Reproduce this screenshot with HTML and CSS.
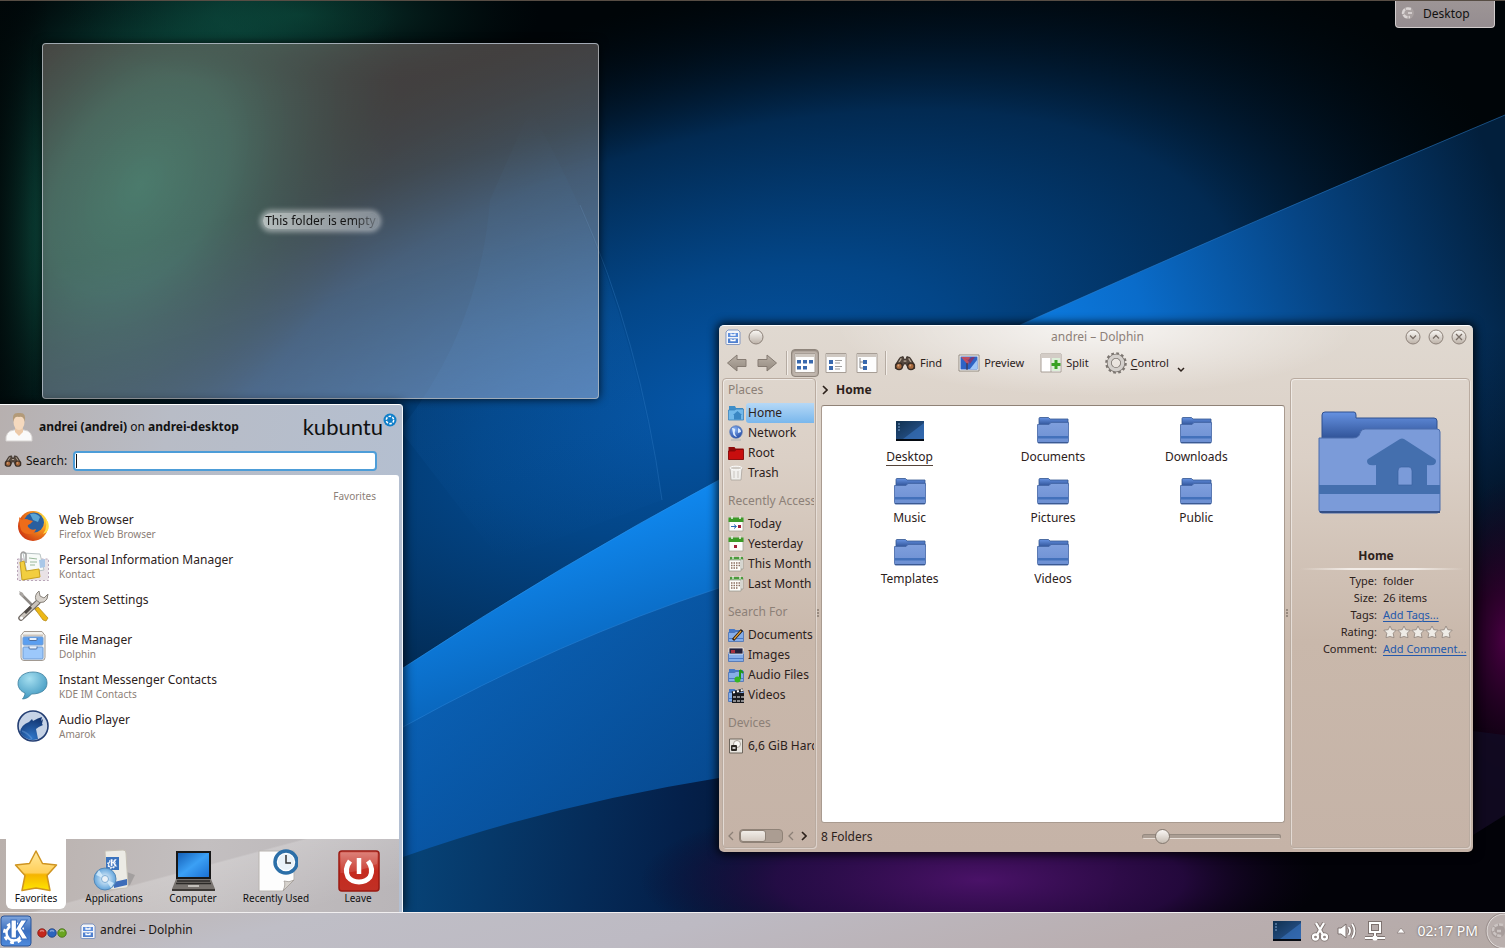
FILE: index.html
```html
<!DOCTYPE html>
<html lang="en">
<head>
<meta charset="utf-8">
<title>Desktop</title>
<link rel="stylesheet" href="styles.css">
</head>
<body>
<svg class="defs" width="0" height="0" aria-hidden="true">
  <defs>
    <linearGradient id="gFold" x1="0" y1="0" x2="0" y2="1"><stop offset="0" stop-color="#7f9fdd"/><stop offset="1" stop-color="#6c8fd2"/></linearGradient>
    <linearGradient id="gBack" x1="0" y1="0" x2="0" y2="1"><stop offset="0" stop-color="#6692e2"/><stop offset="1" stop-color="#2f5296"/></linearGradient>
    <linearGradient id="gBall" x1="0" y1="0" x2="0" y2="1"><stop offset="0" stop-color="#fbf9f6"/><stop offset="1" stop-color="#bcb1a7"/></linearGradient>
    <linearGradient id="gGrey" x1="0" y1="0" x2="0" y2="1"><stop offset="0" stop-color="#b9b0a6"/><stop offset="1" stop-color="#948a80"/></linearGradient>
    <linearGradient id="gStar" x1="0" y1="0" x2="0" y2="1"><stop offset="0" stop-color="#ffe9a0"/><stop offset=".55" stop-color="#ffcf58"/><stop offset=".6" stop-color="#f5b400"/><stop offset="1" stop-color="#ffe600"/></linearGradient>
    <linearGradient id="gRed" x1="0" y1="0" x2="0" y2="1"><stop offset="0" stop-color="#d9736a"/><stop offset=".5" stop-color="#c52a1e"/><stop offset="1" stop-color="#c03025"/></linearGradient>
    <linearGradient id="gScreen" x1="0" y1="0" x2="1" y2="1"><stop offset="0" stop-color="#1560b8"/><stop offset=".5" stop-color="#3ba0f5"/><stop offset="1" stop-color="#1b70d2"/></linearGradient>
    <linearGradient id="gDesk" x1="0" y1="0" x2="1" y2="1"><stop offset="0" stop-color="#10304f"/><stop offset="1" stop-color="#2d5c9c"/></linearGradient>
    <linearGradient id="gKde" x1="0" y1="0" x2="0" y2="1"><stop offset="0" stop-color="#7fa5dc"/><stop offset=".5" stop-color="#3a6fc0"/><stop offset="1" stop-color="#4f8bdd"/></linearGradient>
    <radialGradient id="gBubble" cx=".4" cy=".25" r=".8"><stop offset="0" stop-color="#a5dff0"/><stop offset="1" stop-color="#3a93bd"/></radialGradient>
    <radialGradient id="gGlobe" cx=".4" cy=".3" r=".8"><stop offset="0" stop-color="#8ab4f4"/><stop offset="1" stop-color="#173e9c"/></radialGradient>
    <radialGradient id="gFox" cx=".8" cy=".25" r=".95"><stop offset="0" stop-color="#ffdf3c"/><stop offset=".4" stop-color="#f5901c"/><stop offset="1" stop-color="#c92d10"/></radialGradient>
    <radialGradient id="gWolf" cx=".5" cy=".9" r=".9"><stop offset="0" stop-color="#2f76c8"/><stop offset="1" stop-color="#12346f"/></radialGradient>
    <radialGradient id="gDisc"><stop offset="0" stop-color="#eef7fd"/><stop offset="1" stop-color="#62a5dc"/></radialGradient>
  </defs>
  <symbol id="folder" viewBox="0 0 32 32">
    <path d="M2 3.500q0-1 1-1h8.500l1.500 1.500h18v6H2z" fill="url(#gBack)" stroke="#34568f" stroke-width=".8"/>
    <path d="M.500 9.500h11.500l2-2h17.500v19q0 1.500-1.500 1.500H2q-1.500 0-1.500-1.500z" fill="url(#gFold)" stroke="#4264a4" stroke-width=".8"/>
    <path d="M1 21h30v2.500H1z" fill="#4371bb"/><path d="M1 27.600h30" stroke="#39578f"/>
  </symbol>
  <symbol id="mini-folder" viewBox="0 0 16 16">
    <path d="M1 2h5.500l1 1H15v4H1z" fill="#4678c6"/>
    <path d="M.500 5.500h6L8 4.500h7.500v10H.500z" fill="#86aee8" stroke="#466fb4" stroke-width=".8"/><path d="M1 11.500h14" stroke="#4d7bc5"/>
  </symbol>
  <symbol id="cabinet" viewBox="0 0 32 32">
    <path d="M7 1.500h18l3 4v22q0 3-3 3H7q-3 0-3-3v-22z" fill="#f2f2f0" stroke="#a29a92"/>
    <path d="M6 5.500h20" stroke="#cfc6bd" stroke-width="2"/>
    <rect x="6" y="7" width="20" height="8" rx="1" fill="#5b9ff0" stroke="#6f9bd3"/><rect x="6" y="17" width="20" height="12" rx="1" fill="#9cc8fb" stroke="#6f9bd3"/>
    <path d="M12 8v1.500q0 1 1 1h6q1 0 1-1V8M12 16.500v1.500q0 1 1 1h6q1 0 1-1v-1.500" fill="#e7f1fd" stroke="#4c6e9f"/>
  </symbol>
  <symbol id="mini-cabinet" viewBox="0 0 16 16">
    <path d="M3 1h10l2 2v11.500q0 1-1 1H2q-1 0-1-1V3z" fill="#f4f5f8" stroke="#6a87bb" stroke-width=".8"/>
    <rect x="3" y="4" width="10" height="4" fill="#5f8fdd"/><rect x="3" y="9.500" width="10" height="4.500" fill="#4f80cf"/>
    <path d="M6 4.500v1.500h4V4.500M6 10v1.500h4V10" fill="none" stroke="#fff" stroke-width="1.300"/>
  </symbol>
  <symbol id="binoculars" viewBox="0 0 24 20">
    <path d="M6.500 4l3.500-1 1 3h2l1-3 3.500 1 5 8v4h-7l-2.500-5h-2L8.500 16H1.500v-4z" fill="#54473d" stroke="#2a211b" stroke-width=".8"/>
    <path d="M8 5l-3 5M16 5l3 5M10.500 8h3" stroke="#b5a798" stroke-width="1.300"/>
    <circle cx="5.500" cy="13.500" r="4.300" fill="#3a2e26"/><circle cx="18.500" cy="13.500" r="4.300" fill="#3a2e26"/>
    <circle cx="5.500" cy="13.500" r="2.800" fill="#a86a3e"/><circle cx="18.500" cy="13.500" r="2.800" fill="#a86a3e"/><circle cx="4.800" cy="12.700" r="1" fill="#d9a87e"/><circle cx="17.800" cy="12.700" r="1" fill="#d9a87e"/>
  </symbol>
  <symbol id="kgear" viewBox="0 0 32 32">
    <circle cx="14" cy="18" r="9.500" fill="none" stroke="#fff" stroke-width="3" stroke-dasharray="3.700 3.760"/>
    <circle cx="14" cy="18" r="7.500" fill="none" stroke="#fff" stroke-width="2.500"/>
    <path d="M11 5h5.500v7.500L21 5h6l-5.500 8.500L28 24h-6l-5-8.500-.500.800V23H11z" fill="#fff" stroke="#3a6fc0" stroke-width="1.200"/>
  </symbol>
  <symbol id="calendar" viewBox="0 0 16 16">
    <path d="M1 3h14v12H1z" fill="#fdfdfa" stroke="#a8a79d" stroke-width=".8"/><path d="M.500 1.500h15V6H.500z" fill="#3c9a28"/><path d="M4 0v3M12 0v3" stroke="#e8f3e5" stroke-width="1.500"/>
  </symbol>
  <symbol id="month" viewBox="0 0 16 16">
    <path d="M3 2h12v11H3z" fill="#fdfdfa" stroke="#9b9a90" stroke-width=".8"/><path d="M1 4h12v11H1z" fill="#fdfdfa" stroke="#9b9a90" stroke-width=".8"/><path d="M2 1h13v2.500H2z" fill="#4a9a3b"/><path d="M5 0v3M12 0v3" stroke="#e8f3e5" stroke-width="1.300"/>
    <path d="M3 7h9M3 9.500h9M3 12h7" stroke="#8b6f61" stroke-width="1.500" stroke-dasharray="1.500 1"/>
  </symbol>
  <symbol id="deskthumb" viewBox="0 0 28 20">
    <path d="M0 0h28v20H0z" fill="url(#gDesk)"/><path d="M7 18L28 2v16z" fill="#3872bd" opacity=".65"/><path d="M0 18h28v2H0z" fill="#050a12"/><path d="M2 3h2M2 6h2M2 9h2" stroke="#7fa4d0" stroke-width="1.200"/>
  </symbol>
  <symbol id="ratestar" viewBox="0 0 14 14">
    <path d="M7 1l1.800 3.700 4.400.500-3 3 .8 4.500L7 11.500l-4 1.200.8-4.500-3-3 4.400-.5z" fill="#eeebe6" stroke="#958981" stroke-width=".9"/>
  </symbol>
</svg>

<main class="desktop">
  <svg class="wallpaper" viewBox="0 0 1505 948" preserveAspectRatio="none" aria-hidden="true">
    <defs>
      <radialGradient id="wCore" gradientUnits="userSpaceOnUse" cx="0" cy="0" r="1" gradientTransform="translate(720 400) rotate(-16) scale(820 400)"><stop offset="0" stop-color="#0556a8"/><stop offset=".3" stop-color="#034688"/><stop offset=".65" stop-color="#022a52"/><stop offset="1" stop-color="#000d18" stop-opacity="0"/></radialGradient>
      <radialGradient id="wGreen"><stop offset="0" stop-color="#137058"/><stop offset=".35" stop-color="#0f5a4a" stop-opacity=".9"/><stop offset=".65" stop-color="#083a32" stop-opacity=".55"/><stop offset="1" stop-color="#03201c" stop-opacity="0"/></radialGradient>
      <radialGradient id="wPurple"><stop offset="0" stop-color="#4a1268"/><stop offset=".6" stop-color="#2b0a48" stop-opacity=".8"/><stop offset="1" stop-color="#10031f" stop-opacity="0"/></radialGradient>
      <radialGradient id="wMag"><stop offset="0" stop-color="#480042"/><stop offset="1" stop-color="#20001e" stop-opacity="0"/></radialGradient>
      <linearGradient id="wLeft" x1="0" y1="0" x2="1" y2="0"><stop offset="0" stop-color="#010809" stop-opacity=".8"/><stop offset="1" stop-color="#010809" stop-opacity="0"/></linearGradient>
      <linearGradient id="wArc" x1="0" y1="0" x2="0" y2="1"><stop offset="0" stop-color="#1466b8" stop-opacity="0"/><stop offset=".5" stop-color="#1466b8" stop-opacity=".2"/><stop offset="1" stop-color="#1466b8" stop-opacity="0"/></linearGradient>
      <linearGradient id="wBeam" gradientUnits="userSpaceOnUse" x1="960" y1="400" x2="1505" y2="200"><stop offset="0" stop-color="#0e86f0"/><stop offset=".35" stop-color="#0a6cca"/><stop offset=".65" stop-color="#064585"/><stop offset="1" stop-color="#021f3c"/></linearGradient>
      <linearGradient id="wLow" gradientUnits="userSpaceOnUse" x1="560" y1="520" x2="680" y2="900"><stop offset="0" stop-color="#108af2"/><stop offset=".5" stop-color="#075bac"/><stop offset="1" stop-color="#032d63"/></linearGradient>
      <linearGradient id="wLow2" gradientUnits="userSpaceOnUse" x1="400" y1="720" x2="760" y2="800"><stop offset="0" stop-color="#0a5cae"/><stop offset="1" stop-color="#07498f"/></linearGradient>
      <linearGradient id="wLow3" gradientUnits="userSpaceOnUse" x1="400" y1="850" x2="1000" y2="930"><stop offset="0" stop-color="#074478"/><stop offset=".45" stop-color="#04204a"/><stop offset="1" stop-color="#06020d"/></linearGradient>
      <linearGradient id="wDown" gradientUnits="userSpaceOnUse" x1="0" y1="330" x2="0" y2="600"><stop offset="0" stop-color="#020810" stop-opacity="0"/><stop offset="1" stop-color="#020208"/></linearGradient>
    </defs>
    <path d="M0 0h1505v948H0z" fill="#000508"/>
    <path d="M380 400H760V948H380z" fill="#034a90"/>
    <path d="M0 0h1505v948H0z" fill="url(#wCore)"/>
    <ellipse cx="140" cy="185" rx="220" ry="340" transform="rotate(32 140 185)" fill="url(#wGreen)"/>
    <ellipse cx="300" cy="15" rx="240" ry="70" fill="url(#wGreen)" opacity=".4"/>
    <path d="M0 0h50v404H0z" fill="url(#wLeft)"/>
    <path d="M530 110Q625 270 662 500L500 560L400 430Q480 330 490 200z" fill="url(#wArc)"/>
    <path d="M580 205Q640 340 662 500" fill="none" stroke="#3a88cf" opacity=".3"/>
    <path d="M1505 115Q1250 222 1020 325Q820 420 719 480V948H1505z" fill="url(#wBeam)"/>
    <path d="M1505 115Q1250 222 1020 325" fill="none" stroke="#2f86d6" opacity=".5"/>
    <path d="M1100 330h405v618H1100z" fill="url(#wDown)"/>
    <path d="M403 668Q560 565 719 480L900 700V948H403z" fill="url(#wLow)"/>
    <path d="M403 668Q560 565 719 480" fill="none" stroke="#2b95ec" opacity=".6"/>
    <path d="M403 727Q560 640 719 588L900 600V948H403z" fill="url(#wLow2)" opacity=".75"/>
    <path d="M403 727Q560 640 719 588" fill="none" stroke="#2b86da" opacity=".5"/>
    <path d="M403 857Q550 805 719 778L1505 760V948H403z" fill="url(#wLow3)"/>
    <path d="M1150 700L1505 730V948H1100z" fill="#020208"/>
    <ellipse cx="980" cy="880" rx="340" ry="90" fill="url(#wPurple)"/>
    <ellipse cx="1505" cy="640" rx="65" ry="160" fill="url(#wMag)"/>
    <path d="M1473 731l32 4v80l-32 20z" fill="#120a22" opacity=".9"/>
    <path d="M0 .500h1505" stroke="#574d44"/>
  </svg>

  <button class="toolbox" type="button">
    <svg width="16" height="16" viewBox="0 0 16 16" aria-hidden="true"><circle cx="8" cy="7" r="6" fill="#a9a1a1"/><path d="M11 3Q4 1 3 7Q4 12 10 11" fill="none" stroke="#dad5d5" stroke-width="2.500" stroke-dasharray="5 1"/><path d="M8 7h4" stroke="#d3cdcd" stroke-width="2"/></svg>
    <span>Desktop</span>
  </button>

  <section class="folder-view" aria-label="Desktop folder"><p><span>This folder is empty</span></p></section>

  <section class="launcher" aria-label="Application launcher">
    <header class="launcher-head">
      <div class="user-row">
        <svg width="28" height="32" viewBox="0 0 28 32" aria-hidden="true"><path d="M1 30Q0 20 9 19h10q9 1 8 11z" fill="#fafafa" stroke="#d8d4d2"/><path d="M10 17h8v4l-4 4-4-4z" fill="#ecc9a8"/><ellipse cx="14" cy="11" rx="5.500" ry="8" fill="#f5d9be"/><path d="M8.500 11Q6 1 14 2Q22 1 19.500 11Q19 5 14 6Q9 5 8.500 11z" fill="#b39a78"/></svg>
        <span class="who"><b>andrei (andrei)</b> on <b>andrei-desktop</b></span>
        <span class="brand">kubuntu<svg width="14" height="14" viewBox="0 0 14 14" aria-hidden="true"><circle cx="7" cy="7" r="6.500" fill="#0f7fca"/><circle cx="7" cy="7" r="3.700" fill="none" stroke="#fff" stroke-width="1.500" stroke-dasharray="2.600 1.270"/></svg></span>
      </div>
      <div class="search-row">
        <svg width="18" height="16" aria-hidden="true"><use href="#binoculars"/></svg>
        <label for="q">Search:</label><input id="q" type="text">
      </div>
    </header>
    <div class="launcher-body">
      <h2>Favorites</h2>
      <ul>
        <li><a href="#web"><svg width="32" height="32" viewBox="0 0 32 32"><circle cx="16" cy="16" r="15" fill="url(#gFox)"/><circle cx="17" cy="12.500" r="10" fill="#2a5f9f"/><path d="M13 4q6-2 10 3l-2 5-5-2z" fill="#5ba5d3"/><path d="M2 7l3 3q4-2 7 0l4 1-3 3q-4 1-1 4 3 3 7 1-1 5-7 5-8 0-9-8z" fill="#ee6c1a"/><path d="M27 6q5 10-1 18 8-3 5-12z" fill="#ffe04a"/></svg><span><strong>Web Browser</strong><small>Firefox Web Browser</small></span></a></li>
        <li><a href="#pim"><svg width="32" height="32" viewBox="0 0 32 32"><path d="M.500 9h31v21.500H.500z" fill="#e9e2e6" stroke="#b9a6b9" stroke-dasharray="2 2"/><path d="M6 3l17 1 4 16-17 3z" fill="#f7faf8" stroke="#b9c3c4"/><path d="M22 10l6-1v8l-5 1z" fill="#a9c7e8"/><path d="M3 12l4-1 2 10 13-2 1 8-18 3z" fill="#f2ce40" stroke="#c7a11f"/><path d="M4 12V4q2-4 5 0v9" fill="none" stroke="#9e9e9e" stroke-width="1.500"/><path d="M12 8l8 1M13 12l7 0M13 15l5 0" stroke="#99b89a"/></svg><span><strong>Personal Information Manager</strong><small>Kontact</small></span></a></li>
        <li><a href="#settings"><svg width="32" height="32" viewBox="0 0 32 32"><path d="M3 3l18 18" stroke="#8e8a86" stroke-width="2.500"/><path d="M2 1l4 2 1 4-3-1z" fill="#aaa6a2"/><path d="M21 12L4 28" stroke="#6d6762" stroke-width="5.500" stroke-linecap="round"/><path d="M21 12L4 28" stroke="#c9c3bc" stroke-width="3.300" stroke-linecap="round"/><path d="M14 17L8 23" stroke="#4d4844" stroke-width="3"/><path d="M18 19l3-2 10 11-2 3-3-1z" fill="#edb816" stroke="#b18410" stroke-width=".7"/><path d="M22 1q-5 4-3 9 3 4 8 2 4-2 4-8l-4 4-4-2z" fill="#d7d2cc" stroke="#7e7871" stroke-width=".9"/><circle cx="4.500" cy="28" r="1.500" fill="#fff"/></svg><span><strong>System Settings</strong></span></a></li>
        <li><a href="#files"><svg width="32" height="32"><use href="#cabinet"/></svg><span><strong>File Manager</strong><small>Dolphin</small></span></a></li>
        <li><a href="#im"><svg width="32" height="32" viewBox="0 0 32 32"><path d="M16 2C7 2 1 7 1 13.500c0 4.500 3 8 7 9.500 0 2-1 4-2.500 6 4 0 7-2.500 9-5C24 24 30 20 30 13 30 6 24 2 16 2z" fill="url(#gBubble)" stroke="#3a7c9c" stroke-width=".8"/></svg><span><strong>Instant Messenger Contacts</strong><small>KDE IM Contacts</small></span></a></li>
        <li><a href="#audio"><svg width="32" height="32" viewBox="0 0 32 32"><circle cx="16" cy="16" r="15" fill="#c6d3e6" stroke="#233e73" stroke-width="1.600"/><path d="M3 22q1-7 9-10l3-3 1 2q5-3 9-4l-1 4 2-2-1 5 1 1q-5 2-7 4l2 10q-6 2-10 0-6-2-8-7z" fill="url(#gWolf)"/><path d="M5 21q6 2 10 8" fill="none" stroke="#7aaae0" stroke-width="1.500" opacity=".4"/></svg><span><strong>Audio Player</strong><small>Amarok</small></span></a></li>
      </ul>
    </div>
    <nav class="tabs" aria-label="Launcher sections">
      <button type="button" class="tab active"><svg width="44" height="44" viewBox="0 0 44 44"><path d="M22 2l6.500 12.500 14 1.500-9.500 10.500 3 15L22 39 8 41.500l3-15L1.500 16l14-1.500z" fill="url(#gStar)" stroke="#cf9420" stroke-width="1.500" stroke-linejoin="round"/></svg>Favorites</button>
      <button type="button" class="tab"><svg width="44" height="44" viewBox="0 0 44 44"><path d="M30 40l8-4 5-10-8-3z" fill="#777" opacity=".4"/><path d="M13 2l18-1q3 0 3 3l2 33q0 2-2 2l-19 2z" fill="#ecebe5" stroke="#c5c0b5"/><path d="M14 8h13v13H14z" fill="#3a73bd"/><svg x="14" y="8" width="13" height="13"><use href="#kgear"/></svg><path d="M22 33l13-3v6l-13 3z" fill="#3e6db9"/><circle cx="13" cy="30" r="11" fill="url(#gDisc)" stroke="#5587b5"/><path d="M13 30L4 26l3-5zM13 30l9 4-3 5z" fill="#d9effc" opacity=".8"/><circle cx="13" cy="30" r="3.500" fill="#eaf1f7" stroke="#7faed6"/></svg>Applications</button>
      <button type="button" class="tab"><svg width="44" height="44" viewBox="0 0 44 44"><path d="M5 2h35v28H5z" fill="#171717"/><path d="M7 4h31v24H7z" fill="url(#gScreen)"/><path d="M5 30h35l4 10H1z" fill="#77726e"/><path d="M6 32h33M5 34.500h35" stroke="#2b2927" stroke-width="1.500"/><path d="M1 40h43v2H1z" fill="#3c3835"/><path d="M17 37h11" stroke="#c2beb9" stroke-width="2"/></svg>Computer</button>
      <button type="button" class="tab"><svg width="44" height="44" viewBox="0 0 44 44"><path d="M5 2h35v29L29 42H5z" fill="#fdfdfd" stroke="#b9b4b0"/><path d="M40 31L29 42q3-7 1-10 5 2 10-1z" fill="#d6d2cd" stroke="#a19b95" stroke-width=".8"/><circle cx="32" cy="13" r="11" fill="#fff" stroke="#2c6fa8" stroke-width="3.500"/><circle cx="32" cy="13" r="8" fill="#e9f2f9"/><path d="M32 6v8h5" fill="none" stroke="#333" stroke-width="1.500"/></svg>Recently Used</button>
      <button type="button" class="tab"><svg width="44" height="44" viewBox="0 0 44 44"><rect x="3" y="2" width="40" height="40" rx="3" fill="url(#gRed)" stroke="#9b1a12" stroke-width="1.500"/><path d="M4.500 24Q21 24 41 15V4H5z" fill="#fff" opacity=".13"/><path d="M14 12Q8 20 12 28Q16 33 23 33T34 28Q38 20 32 12" fill="none" stroke="#fff" stroke-width="5"/><path d="M23 9v16" stroke="#fff" stroke-width="4.500"/></svg>Leave</button>
    </nav>
  </section>

  <section class="window" aria-label="andrei – Dolphin">
    <header class="titlebar">
      <svg width="16" height="16" aria-hidden="true"><use href="#mini-cabinet"/></svg>
      <button type="button" aria-label="On all desktops"><svg width="16" height="16" viewBox="0 0 16 16"><circle cx="8" cy="8" r="7" fill="url(#gBall)" stroke="#8d827a"/></svg></button>
      <h1>andrei – Dolphin</h1>
      <button type="button" aria-label="Minimize"><svg width="16" height="16" viewBox="0 0 16 16"><circle cx="8" cy="8" r="7" fill="url(#gBall)" stroke="#8d827a"/><path d="M5 6.500l3 3 3-3" fill="none" stroke="#796e66" stroke-width="1.300"/></svg></button>
      <button type="button" aria-label="Maximize"><svg width="16" height="16" viewBox="0 0 16 16"><circle cx="8" cy="8" r="7" fill="url(#gBall)" stroke="#8d827a"/><path d="M5 9.500l3-3 3 3" fill="none" stroke="#796e66" stroke-width="1.300"/></svg></button>
      <button type="button" aria-label="Close"><svg width="16" height="16" viewBox="0 0 16 16"><circle cx="8" cy="8" r="7" fill="url(#gBall)" stroke="#8d827a"/><path d="M5 5l6 6m0-6l-6 6" stroke="#796e66" stroke-width="1.300"/></svg></button>
    </header>

    <div class="toolbar" role="toolbar">
      <button type="button" class="nav" aria-label="Back"><svg width="20" height="20" viewBox="0 0 20 20"><path d="M.500 10L10 2v4.500h9v7h-9V18z" fill="url(#gGrey)" stroke="#857b72"/></svg></button>
      <button type="button" class="nav" aria-label="Forward"><svg width="20" height="20" viewBox="0 0 20 20"><path d="M19.500 10L10 2v4.500H1v7h9V18z" fill="url(#gGrey)" stroke="#857b72"/></svg></button>
      <span class="sep"></span>
      <button type="button" class="mode on" aria-label="Icons"><svg width="22" height="22" viewBox="0 0 22 22"><path d="M1 1.500h20v19H1z" fill="#fdfdfd" stroke="#a79e96"/><path d="M1.500 2h19v3h-19z" fill="#cfc8c1"/><path d="M3 8h4v3.500H3zM9 8h4v3.500H9zM15 8h4v3.500h-4zM3 14h4v3.500H3zM9 14h4v3.500H9z" fill="#3868ad"/></svg></button>
      <button type="button" class="mode" aria-label="Compact"><svg width="22" height="22" viewBox="0 0 22 22"><path d="M1 1.500h20v19H1z" fill="#fdfdfd" stroke="#a79e96"/><path d="M1.500 2h19v3h-19z" fill="#cfc8c1"/><path d="M4 8h4v4H4zM4 14h4v4H4z" fill="#3868ad"/><path d="M10 8.500h7M10 11h5M10 14.500h7M10 17h5" stroke="#9b9b9b"/></svg></button>
      <button type="button" class="mode" aria-label="Details"><svg width="22" height="22" viewBox="0 0 22 22"><path d="M1 1.500h20v19H1z" fill="#fdfdfd" stroke="#a79e96"/><path d="M1.500 2h19v3h-19z" fill="#cfc8c1"/><path d="M7 8h4v4H7zM7 14h4v4H7z" fill="#3868ad"/><path d="M4 6v10h3M4 10h3" fill="none" stroke="#888"/></svg></button>
      <span class="sep"></span>
      <button type="button" class="act"><svg width="22" height="20"><use href="#binoculars"/></svg>Find</button>
      <button type="button" class="act"><svg width="22" height="20" viewBox="0 0 22 20"><path d="M1 2h20v16H1z" fill="#fff" stroke="#91897f"/><path d="M2.500 3.500h17v13h-17z" fill="#2e63c5"/><path d="M3 4h9l-2 8z" fill="#bf4f60"/><path d="M4 4q7 3 8 7l5-7h-3l-4 3z" fill="#7a3a78"/><path d="M12 16l7-9v9z" fill="#9fc6f5"/><path d="M9 10v7" stroke="#3d2a33"/></svg>Preview</button>
      <button type="button" class="act"><svg width="22" height="22" viewBox="0 0 22 22"><path d="M1 2h20v18H1z" fill="#fff" stroke="#a79e96"/><path d="M1 2h20v4H1z" fill="#d3ccc6"/><path d="M11 6v14" stroke="#a79e96"/><path d="M12 6h8v13h-8z" fill="#dcefd8"/><path d="M16 8v9M11.500 12.500h9" stroke="#39a023" stroke-width="3"/></svg>Split</button>
      <button type="button" class="act"><svg width="22" height="22" viewBox="0 0 22 22"><circle cx="11" cy="11" r="9.300" fill="none" stroke="#7c7671" stroke-width="3" stroke-dasharray="2.600 2.270"/><circle cx="11" cy="11" r="6.700" fill="none" stroke="#7c7671" stroke-width="5"/><circle cx="11" cy="11" r="6.700" fill="none" stroke="#d4d0cc" stroke-width="3.400"/></svg><span><u>C</u>ontrol</span><svg class="drop" width="8" height="6" viewBox="0 0 8 6"><path d="M1 1l3 3 3-3" fill="none" stroke="#2c211b" stroke-width="1.500"/></svg></button>
    </div>

    <div class="panes">
      <aside class="places">
        <div class="places-list">
          <h3>Places</h3>
          <a href="#home" class="selected"><svg width="16" height="16" viewBox="0 0 16 16"><path d="M1 1h6l1 2h7v4H1z" fill="#3f8fc9"/><path d="M.500 5h6L8 4h7.500v11H.500z" fill="#72b9ea" stroke="#3b83bb" stroke-width=".8"/><path d="M5 10l4.500-4L14 10h-1v4.500H6V10z" fill="#3a87c3"/></svg><span>Home</span></a>
          <a href="#network"><svg width="16" height="16" viewBox="0 0 16 16"><circle cx="8" cy="7" r="6.300" fill="url(#gGlobe)" stroke="#5d7cb4" stroke-width=".7"/><path d="M4 3q4 0 3 3t2 6q-4-1-4-4zM10 3q3 1 3 4l-3 1z" fill="#dcebfd"/><path d="M3 15h10" stroke="#bcbcbc" stroke-width="1.500"/></svg><span>Network</span></a>
          <a href="#root"><svg width="16" height="16" viewBox="0 0 16 16"><path d="M.500 2h6l1 1.500h8v11H.500z" fill="#8e0a0a"/><path d="M.500 6h6l2-1.500h7v10H.500z" fill="#c80e0e" stroke="#7d0606" stroke-width=".8"/></svg><span>Root</span></a>
          <a href="#trash"><svg width="16" height="16" viewBox="0 0 16 16"><path d="M2 3h12l-1 12H3z" fill="#efeeec" stroke="#aaa39d" stroke-width=".8"/><ellipse cx="8" cy="3" rx="6" ry="1.800" fill="#cfcac4" stroke="#fff"/><path d="M6 6v7M10 6v7" stroke="#c9c5c0"/></svg><span>Trash</span></a>
          <h3>Recently Accessed</h3>
          <a href="#today"><svg width="16" height="16"><use href="#calendar"/><path d="M3 10.500h5m-2-2l2.500 2-2.500 2" fill="none" stroke="#2e68b4"/><path d="M10 9h3v3h-3z" fill="#a3213a"/></svg><span>Today</span></a>
          <a href="#yesterday"><svg width="16" height="16"><use href="#calendar"/><path d="M6 9h3v3H6z" fill="#a3213a"/></svg><span>Yesterday</span></a>
          <a href="#thismonth"><svg width="16" height="16"><use href="#month"/></svg><span>This Month</span></a>
          <a href="#lastmonth"><svg width="16" height="16"><use href="#month"/></svg><span>Last Month</span></a>
          <h3>Search For</h3>
          <a href="#docs"><svg width="16" height="16"><use href="#mini-folder"/><path d="M5 13L14 3" stroke="#2b1d10" stroke-width="3"/><path d="M6 12L13 4" stroke="#e9a53a" stroke-width="1.200"/></svg><span>Documents</span></a>
          <a href="#images"><svg width="16" height="16"><use href="#mini-folder"/><path d="M1 1h14v6H1z" fill="#22203a" stroke="#fff" stroke-width=".7"/><path d="M3 3h4v3H3z" fill="#a5303f"/></svg><span>Images</span></a>
          <a href="#audiofiles"><svg width="16" height="16"><use href="#mini-folder"/><path d="M12 3v9" stroke="#1f9a16" stroke-width="2"/><circle cx="9.500" cy="12.500" r="3" fill="#35b723"/><path d="M12 3l3 3" stroke="#1f9a16" stroke-width="2"/></svg><span>Audio Files</span></a>
          <a href="#videos"><svg width="16" height="16"><use href="#mini-folder"/><path d="M4 6h12v10H4z" fill="#19191d"/><path d="M5 10h11M5 14h11" stroke="#fff" stroke-dasharray="3 1"/><path d="M4 6l11-3" stroke="#19191d" stroke-width="3"/><path d="M5 5.500l10-2.500" stroke="#fff" stroke-dasharray="2 2" stroke-width="2"/></svg><span>Videos</span></a>
          <h3>Devices</h3>
          <a href="#disk"><svg width="16" height="16" viewBox="0 0 16 16"><path d="M1.500 1h13v14h-13z" fill="#e8e5df" stroke="#6e665d"/><circle cx="9" cy="6" r="3.500" fill="#f8f7f4" stroke="#a8a098"/><rect x="3" y="7" width="6" height="6" rx="1" fill="#2c2824"/><path d="M4.500 10h3" stroke="#fff" stroke-width="1.500"/></svg><span>6,6 GiB Hard Drive</span></a>
        </div>
        <div class="hscroll">
          <button type="button" class="dim" aria-label="Scroll left"><svg width="6" height="10" viewBox="0 0 6 10"><path d="M5 1L1 5l4 4" fill="none" stroke="currentColor" stroke-width="1.300"/></svg></button>
          <div class="track"><div class="thumb"></div></div>
          <button type="button" class="dim" aria-label="Step left"><svg width="6" height="10" viewBox="0 0 6 10"><path d="M5 1L1 5l4 4" fill="none" stroke="currentColor" stroke-width="1.300"/></svg></button>
          <button type="button" aria-label="Scroll right"><svg width="6" height="10" viewBox="0 0 6 10"><path d="M1 1l4 4-4 4" fill="none" stroke="currentColor" stroke-width="1.600"/></svg></button>
        </div>
      </aside>
      <div class="grip"></div>
      <div class="content">
        <div class="crumbs"><svg width="6" height="10" viewBox="0 0 6 10"><path d="M1 1l4 4-4 4" fill="none" stroke="#2c211b" stroke-width="1.600"/></svg><a href="#home">Home</a></div>
        <div class="view">
          <a href="#d1" class="current"><svg width="32" height="32" viewBox="0 0 32 32"><svg x="2" y="6" width="28" height="20"><use href="#deskthumb"/></svg></svg><span>Desktop</span></a>
          <a href="#d2"><svg width="32" height="32"><use href="#folder"/></svg><span>Documents</span></a>
          <a href="#d3"><svg width="32" height="32"><use href="#folder"/></svg><span>Downloads</span></a>
          <a href="#d4"><svg width="32" height="32"><use href="#folder"/></svg><span>Music</span></a>
          <a href="#d5"><svg width="32" height="32"><use href="#folder"/></svg><span>Pictures</span></a>
          <a href="#d6"><svg width="32" height="32"><use href="#folder"/></svg><span>Public</span></a>
          <a href="#d7"><svg width="32" height="32"><use href="#folder"/></svg><span>Templates</span></a>
          <a href="#d8"><svg width="32" height="32"><use href="#folder"/></svg><span>Videos</span></a>
        </div>
        <footer class="status"><span>8 Folders</span><input type="range" min="0" max="100" value="10" aria-label="Icon size"></footer>
      </div>
      <div class="grip"></div>
      <aside class="info">
        <svg class="preview" width="124" height="106" viewBox="0 0 124 106" aria-hidden="true">
          <path d="M4 4q0-3 3-3h29q2 0 2 3v3h78q3 0 3 3v18H4z" fill="url(#gBack)" stroke="#2f5190"/>
          <path d="M1 27h34q6 0 7-5 1-4 5-4h72q3 0 3 3v78q0 3-3 3H4q-3 0-3-3z" fill="#7b9bd9" stroke="#4a6cac"/>
          <path d="M1 74h121v9H1z" fill="#446fae"/>
          <path d="M82 28q2-1 4 0l31 20q2 2 0 5-2 2-8 1v21H58V54q-6 1-8-1-2-3 0-5z" fill="#446fae"/>
          <path d="M80 74V60q0-4 3-4h8q3 0 3 4v14z" fill="#7b9bd9" stroke="#3b62a0" stroke-width=".7"/>
          <path d="M2 101h120" stroke="#334f86" stroke-width="2"/>
        </svg>
        <h2>Home</h2>
        <hr>
        <dl>
          <dt>Type:</dt><dd>folder</dd>
          <dt>Size:</dt><dd>26 items</dd>
          <dt>Tags:</dt><dd><a href="#tags">Add Tags...</a></dd>
          <dt>Rating:</dt><dd class="stars"><svg width="14" height="14"><use href="#ratestar"/></svg><svg width="14" height="14"><use href="#ratestar"/></svg><svg width="14" height="14"><use href="#ratestar"/></svg><svg width="14" height="14"><use href="#ratestar"/></svg><svg width="14" height="14"><use href="#ratestar"/></svg></dd>
          <dt>Comment:</dt><dd><a href="#comment">Add Comment...</a></dd>
        </dl>
      </aside>
    </div>
  </section>
</main>

<footer class="taskbar">
  <button type="button" class="kmenu" aria-label="Application Launcher"><svg width="32" height="32" viewBox="0 0 32 32"><rect x="1" y="1" width="30" height="30" rx="3" fill="url(#gKde)" stroke="#2b5599"/><use href="#kgear"/></svg></button>
  <button type="button" class="activities" aria-label="Activities"><svg width="30" height="12" viewBox="0 0 30 12"><circle cx="5" cy="6" r="4.300" fill="#c4281d" stroke="#7b120b" stroke-width=".7"/><circle cx="15" cy="6" r="4.300" fill="#2c64bd" stroke="#173a77" stroke-width=".7"/><circle cx="25" cy="6" r="4.300" fill="#69a520" stroke="#3b650c" stroke-width=".7"/><path d="M3 4.500q2-2 4 0M13 4.500q2-2 4 0M23 4.500q2-2 4 0" fill="none" stroke="#fff" opacity=".4" stroke-width="1.500"/></svg></button>
  <button type="button" class="task"><svg width="16" height="16"><use href="#mini-cabinet"/></svg><span>andrei – Dolphin</span></button>
  <div class="tray">
    <button type="button" aria-label="Show desktop"><svg width="28" height="20"><use href="#deskthumb"/></svg></button>
    <button type="button" aria-label="Clipboard"><svg width="18" height="22" viewBox="0 0 18 22"><g fill="none" stroke="#7e7370" stroke-width="4"><path d="M5 3l7 12M13 3L6 15"/><circle cx="4.500" cy="17" r="2.500"/><circle cx="13.500" cy="17" r="2.500"/></g><g fill="none" stroke="#fff" stroke-width="2.300"><path d="M5 3l7 12M13 3L6 15"/><circle cx="4.500" cy="17" r="2.500"/><circle cx="13.500" cy="17" r="2.500"/></g></svg></button>
    <button type="button" aria-label="Volume"><svg width="22" height="20" viewBox="0 0 22 20"><path d="M2 7h3l5-4v14l-5-4H2z" fill="#fff" stroke="#7e7370"/><g fill="none" stroke="#7e7370" stroke-width="3.500"><path d="M12.500 6q3 4 0 8M16 3q5 7 0 14"/></g><g fill="none" stroke="#fff" stroke-width="1.800"><path d="M12.500 6q3 4 0 8M16 3q5 7 0 14"/></g></svg></button>
    <button type="button" aria-label="Network"><svg width="22" height="22" viewBox="0 0 22 22"><g fill="none" stroke="#7e7370" stroke-width="4"><path d="M6 3h10v9H6zM11 12v5M1 18h20"/></g><g fill="none" stroke="#fff" stroke-width="2"><path d="M6 3h10v9H6zM11 12v5M1 18h20"/></g><circle cx="11" cy="18" r="2.600" fill="#fff"/></svg></button>
    <button type="button" aria-label="Show hidden icons"><svg width="10" height="8" viewBox="0 0 10 8"><path d="M5 1l4 5H1z" fill="#fff" stroke="#8f8481" stroke-width=".8"/></svg></button>
    <time>02:17 PM</time>
    <button type="button" class="cashew" aria-label="Panel tools"><svg width="20" height="36" viewBox="0 0 20 36"><circle cx="19" cy="18" r="17" fill="#b9afad" stroke="#e4dfdd"/><circle cx="19" cy="18" r="18" fill="none" stroke="#9b908e"/><circle cx="13" cy="18" r="7" fill="#a79d9b"/><path d="M18 12q-9-2-10 5 1 6 9 6M12 18h5" fill="none" stroke="#cbc4c2" stroke-width="2.500" stroke-dasharray="4 1"/></svg></button>
  </div>
</footer>
</body>
</html>
```

FILE: styles.css
```css
* { box-sizing: border-box; }

body {
  margin: 0;
  min-height: 100vh;
  display: flex;
  flex-direction: column;
  font-family: "Noto Sans", "Open Sans", sans-serif;
  font-size: 12px;
  line-height: 16px;
  color: #2c211b;
  background: #000508;
  overflow: hidden;
}

h1, h2, h3, p, ul, dl, dd, hr { margin: 0; padding: 0; font-size: inherit; font-weight: normal; }
ul { list-style: none; }
a { color: inherit; text-decoration: none; }
svg { display: block; flex: none; }
button { border: 0; padding: 0; background: none; font: inherit; color: inherit; }

.defs { position: absolute; }

.desktop { position: relative; flex: 1; }
.wallpaper { position: absolute; inset: 0; width: 100%; height: 100vh; }

/* Desktop toolbox */
.toolbox {
  position: absolute;
  top: 1px;
  right: 10px;
  width: 100px;
  height: 27px;
  display: flex;
  align-items: center;
  gap: 7px;
  padding: 0 4px;
  border: 1px solid #d2cdcd;
  border-top: 0;
  border-radius: 0 0 4px 4px;
  background: linear-gradient(#9d9596, #958d90);
  color: #111;
}

/* Folder view */
.folder-view {
  position: absolute;
  left: 42px;
  top: 43px;
  width: 37%;
  height: 39%;
  display: flex;
  align-items: center;
  justify-content: center;
  border: 1px solid rgba(190, 195, 200, .75);
  border-radius: 4px;
  background: linear-gradient(165deg, rgba(150, 125, 118, .46), rgba(140, 140, 138, .46) 45%, rgba(145, 170, 210, .58));
  box-shadow: 0 0 10px rgba(0, 0, 0, .8);
  color: #141414;
}
.folder-view p {
  padding: 0 2px;
  border-radius: 8px;
  background: linear-gradient(90deg, rgba(255, 255, 255, .6), rgba(255, 255, 255, .35));
  box-shadow: 0 0 5px 3px rgba(255, 255, 255, .45);
}
.folder-view span {
  display: block;
  -webkit-mask-image: linear-gradient(90deg, #000 78%, rgba(0, 0, 0, .25));
  mask-image: linear-gradient(90deg, #000 78%, rgba(0, 0, 0, .25));
}

/* Launcher */
.launcher {
  position: absolute;
  left: 0;
  bottom: 0;
  width: 403px;
  height: 508px;
  display: flex;
  flex-direction: column;
  padding-right: 3px;
  border-top: 1px solid #fff;
  border-right: 1px solid #f3f6fa;
  border-radius: 0 4px 0 0;
  background: linear-gradient(100deg, #b7b0af 0%, #b8bcc6 35%, #b3c0d3 100%);
  box-shadow: 0 0 12px rgba(0, 0, 0, .9);
  color: #111;
}
.user-row { display: flex; align-items: center; gap: 6px; height: 43px; padding: 0 2px 0 5px; }
.who { flex: 1; }
.brand { display: flex; align-items: flex-start; font-family: Lato, sans-serif; font-size: 22px; line-height: 28px; }
.search-row { display: flex; align-items: center; gap: 4px; height: 27px; padding: 0 22px 1px 4px; }
.search-row input {
  flex: 1;
  height: 20px;
  margin-left: 2px;
  padding: 0 4px;
  border: 2px solid #4d9dd8;
  border-radius: 4px;
  background: linear-gradient(#111, #111) 1px 1px / 1px 14px no-repeat #fff;
  font: inherit;
  outline: 0;
}
.launcher-body { flex: 1; background: #fff; border-radius: 0 3px 0 0; padding: 13px 23px 0 17px; color: #2c211b; }
.launcher-body h2 { font-size: 10px; text-align: right; color: #8c8077; margin-bottom: 2px; }
.launcher-body li a { display: flex; gap: 10px; height: 40px; padding-top: 4px; }
.launcher-body li span { display: flex; flex-direction: column; padding-top: 2px; }
.launcher-body strong { font-weight: normal; line-height: 15px; }
.launcher-body small { font-size: 10px; line-height: 14px; color: #8c8077; }

.tabs {
  display: grid;
  grid-template-columns: 60fr 96fr 62fr 104fr 60fr;
  height: 73px;
  padding: 0 11px 3px 6px;
  background: linear-gradient(165deg, transparent 45%, rgba(255, 255, 255, .2) 46%, transparent 85%), linear-gradient(100deg, #b9b0ac, #c3bfc0 50%, #b9b5b8);
}
.tab { display: flex; flex-direction: column; align-items: center; justify-content: flex-start; padding-top: 10px; font-size: 10px; line-height: 10px; white-space: nowrap; }
.tab.active { background: #fff; border-radius: 0 0 6px 6px; }

/* File manager window */
.window {
  position: absolute;
  left: 719px;
  right: 32px;
  top: 325px;
  bottom: 60px;
  display: flex;
  flex-direction: column;
  padding: 0 3px 4px;
  border-top: 1px solid #fff;
  border-radius: 5px;
  background:
    radial-gradient(ellipse 260px 70px at 50% 0, rgba(255, 255, 255, .75), transparent),
    linear-gradient(#e0d9d1, #dbd0c6 25%, #c9b8ab 60%, #c5b3a7);
  box-shadow: 0 0 10px 2px rgba(0, 0, 0, .85);
}
.titlebar { display: flex; align-items: center; gap: 7px; height: 21px; padding: 0 3px; }
.titlebar h1 { flex: 1; padding-left: 26px; text-align: center; color: #8d8078; }

.toolbar { display: flex; align-items: center; height: 31px; padding-left: 5px; font-size: 11px; }
.nav { margin-right: 10px; }
.sep { width: 2px; height: 24px; border-left: 1px solid #b5aba2; border-right: 1px solid #f3eee9; }
.nav + .sep { margin: 0 3px 0 -1px; }
.mode { display: flex; align-items: center; justify-content: center; width: 28px; height: 28px; margin-right: 3px; }
.mode.on { border: 1px solid #8f857c; border-radius: 4px; background: #c0b6ad; box-shadow: inset 0 1px 2px #857b72; }
.mode + .sep { margin: 0 7px 0 1px; }
.act { display: flex; align-items: center; gap: 4px; margin-right: 16px; }
.act u { text-underline-offset: 2px; }
.drop { margin: 14px 0 0 4px; }

.panes { flex: 1; display: flex; min-height: 0; }
.places, .info { border: 1px solid #b9aba0; border-radius: 4px; box-shadow: inset 1px 1px 0 rgba(255, 255, 255, .5), 1px 1px 0 rgba(255, 255, 255, .4); }
.places { flex: none; width: 94px; display: flex; flex-direction: column; padding: 0 1px 3px 5px; }
.places-list { flex: 1; overflow: hidden; }
.places h3 { line-height: 22px; margin: 7px 0 2px; white-space: nowrap; color: #8c8077; }
.places h3:first-child { margin-top: 0; }
.places a { display: flex; align-items: center; gap: 2px; height: 20px; white-space: nowrap; }
.places a span { flex: 1; padding: 0 2px; line-height: 20px; }
.places .selected span { background: linear-gradient(#b5d8f6, #79b7ec); border-radius: 3px 0 0 3px; }
.hscroll { display: flex; align-items: center; gap: 7px; height: 17px; padding-right: 7px; }
.hscroll .dim { color: #8c8077; }
.track { flex: 1; height: 14px; margin: 0 -2px; border: 1px solid #8f8277; border-radius: 4px; background: #ab9d92; }
.thumb { width: 62%; height: 12px; border: 1px solid #8f8277; border-radius: 3px; background: linear-gradient(#f1ede8, #d6ccc3); }

.grip { flex: none; width: 5px; height: 10px; align-self: center; background: radial-gradient(circle at 2px 2px, #998b80 1px, transparent 1px) 0 0 / 5px 3px repeat-y; }

.content { flex: 1; display: flex; flex-direction: column; min-width: 0; }
.crumbs { display: flex; align-items: center; gap: 8px; height: 27px; padding: 0 0 4px 1px; font-weight: bold; }
.view {
  flex: 1;
  display: grid;
  grid-template-columns: repeat(3, 1fr);
  grid-auto-rows: 51px;
  row-gap: 10px;
  padding: 9px 16px;
  border: 1px solid #a99b90;
  border-top-color: #8f8277;
  border-radius: 3px;
  background: #fff;
}
.view a { display: flex; flex-direction: column; align-items: center; }
.view a span { margin-top: 1px; line-height: 18px; }
.view .current span { height: 18px; border-bottom: 1px solid #55443a; }
.status { display: flex; align-items: center; justify-content: space-between; height: 25px; padding: 2px 4px 0 0; }
.status input { appearance: none; width: 139px; height: 16px; margin: 0; background: none; }
.status input::-webkit-slider-runnable-track { height: 5px; border: 1px solid #968a80; border-bottom-color: #e8dfd8; border-radius: 3px; background: #ab9e94; }
.status input::-webkit-slider-thumb { appearance: none; width: 15px; height: 15px; margin-top: -6px; border: 1px solid #83786f; border-radius: 50%; background: linear-gradient(#faf7f4, #c6bcb2); }

.info { flex: none; width: 180px; display: flex; flex-direction: column; padding: 32px 5px 0 9px; font-size: 11px; }
.preview { align-self: center; margin-right: 4px; }
.info h2 { margin-top: 31px; padding-right: 12px; text-align: center; font-size: 12px; font-weight: bold; }
.info hr { height: 2px; margin: 4px 0 2px; border: 0; background: linear-gradient(90deg, transparent, #f2ece7 30%, #f2ece7 70%, transparent); }
.info dl { display: grid; grid-template-columns: 77px auto; column-gap: 6px; line-height: 17px; white-space: nowrap; }
.info dt { text-align: right; }
.info dd a { color: #2459ac; text-decoration: underline; text-underline-offset: 2px; }
.stars { display: flex; align-items: center; }

/* Panel */
.taskbar {
  position: relative;
  display: flex;
  align-items: center;
  height: 36px;
  border-top: 1px solid #f1eff0;
  background: linear-gradient(165deg, #bcb3b0 0, #bfbec6 20%, #bdbac3 45%, #b9aeb0 75%, #b5aaa6);
  color: #1c1816;
}
.activities { margin: 4px 13px 0 5px; }
.task { display: flex; align-items: center; gap: 4px; flex: 1; }
.task span { padding-bottom: 2px; }
.tray { display: flex; align-items: center; gap: 10px; }
.tray button:nth-child(3) { margin: 0 -4px 0 -3px; }
.tray time { margin: 0 -3px 0 1px; font-size: 14px; color: #fff; text-shadow: 0 0 2px #7e7370, 0 0 2px #7e7370; }
```
